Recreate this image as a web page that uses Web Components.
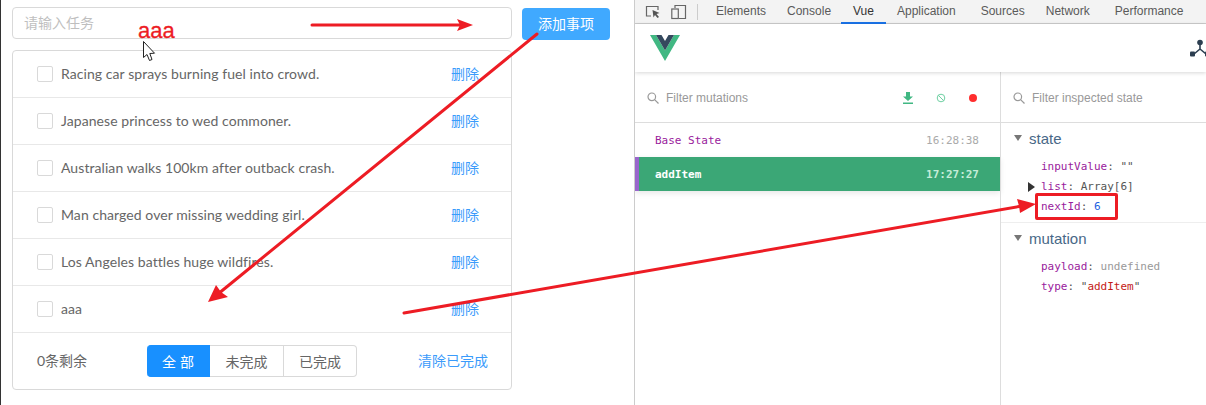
<!DOCTYPE html>
<html lang="zh">
<head>
<meta charset="utf-8">
<title>todo</title>
<style>
    html, body { margin: 0; padding: 0; background: #fff; }
    body { width: 1206px; height: 405px; overflow: hidden; position: relative; display: flex; font-family: Lato, "Noto Sans CJK SC", sans-serif; }
</style>
</head>
<body>
<todo-app></todo-app>
<dev-panel></dev-panel>
<red-notes></red-notes>

<script>
// lista de tareas (parte izquierda)
class TodoRow extends HTMLElement {
    constructor() {
        super();
        this.shadow = this.attachShadow({mode: 'open'});
    }

    connectedCallback() {
        this.shadow.innerHTML = `
        <style>
            :host {
                display: flex;
                align-items: center;
                height: 46px;
                padding: 0 32px 0 24px;
                border-bottom: 1px solid #e8e8e8;
                font-size: 14px;
                color: #666;
            }
            i {
                width: 14px;
                height: 14px;
                border: 1px solid #d9d9d9;
                border-radius: 2px;
                margin-right: 8px;
            }
            span { flex: 1; letter-spacing: .07px; padding-bottom: 2px; }
            a { color: #3a9bfb; padding-bottom: 2px; }
        </style>
        <i></i><span><slot></slot></span><a>删除</a>
        `;
    }
}

class FilterGroup extends HTMLElement {
    constructor() {
        super();
        this.shadow = this.attachShadow({mode: 'open'});
    }

    connectedCallback() {
        this.shadow.innerHTML = `
        <style>
            :host { display: flex; height: 32px; font-size: 14px; color: #666; }
            div {
                display: flex;
                align-items: center;
                justify-content: center;
                box-sizing: border-box;
                border: 1px solid #d9d9d9;
                border-left: 0;
                padding-bottom: 1px;
            }
            .on {
                width: 63px;
                background: #1890ff;
                border-color: #1890ff;
                color: #fff;
                border-radius: 4px 0 0 4px;
                letter-spacing: 4px;
                padding-left: 4px;
            }
            .mid { width: 74px; }
            .end { width: 73px; border-radius: 0 4px 4px 0; }
        </style>
        <div class="on">全部</div><div class="mid">未完成</div><div class="end">已完成</div>
        `;
    }
}

class TodoApp extends HTMLElement {
    constructor() {
        super();
        this.shadow = this.attachShadow({mode: 'open'});
    }

    connectedCallback() {
        this.shadow.innerHTML = `
        <style>
            :host {
                display: block;
                box-sizing: border-box;
                width: 634px;
                flex: none;
                padding: 7px 24px 0 11px;
                border-left: 1px solid #333;
            }
            .top { display: flex; gap: 10px; align-items: flex-start; }
            .input {
                box-sizing: border-box;
                width: 500px;
                height: 32px;
                border: 1px solid #d9d9d9;
                border-radius: 4px;
                padding: 0 11px;
                line-height: 30px;
                font-size: 14px;
                color: #bfbfbf;
            }
            .add {
                margin-top: 1px;
                width: 88px;
                height: 32px;
                line-height: 31px;
                text-align: center;
                background: #40a9ff;
                border-radius: 4px;
                color: #fff;
                font-size: 14px;
            }
            .list {
                box-sizing: border-box;
                width: 500px;
                margin-top: 10px;
                border: 1px solid #d9d9d9;
                border-radius: 4px;
            }
            .foot {
                display: flex;
                align-items: center;
                height: 56px;
                padding: 0 23px 0 24px;
                font-size: 14px;
                color: #666;
            }
            .left { width: 110px; padding-bottom: 2px; }
            .clear { margin-left: auto; color: #3a9bfb; padding-bottom: 2px; }
        </style>
        <div class="top">
            <div class="input">请输入任务</div>
            <div class="add">添加事项</div>
        </div>
        <div class="list">
            <todo-row>Racing car sprays burning fuel into crowd.</todo-row>
            <todo-row>Japanese princess to wed commoner.</todo-row>
            <todo-row>Australian walks 100km after outback crash.</todo-row>
            <todo-row>Man charged over missing wedding girl.</todo-row>
            <todo-row>Los Angeles battles huge wildfires.</todo-row>
            <todo-row>aaa</todo-row>
            <div class="foot">
                <span class="left">0条剩余</span>
                <filter-group></filter-group>
                <span class="clear">清除已完成</span>
            </div>
        </div>
        `;
    }
}

// panel de devtools (parte derecha)
class DevTabs extends HTMLElement {
    constructor() {
        super();
        this.shadow = this.attachShadow({mode: 'open'});
    }

    connectedCallback() {
        this.shadow.innerHTML = `
        <style>
            :host {
                display: flex;
                align-items: center;
                height: 23px;
                background: #f3f3f3;
                border-bottom: 1px solid #ccc;
                font: 12px "Liberation Sans", sans-serif;
                color: #5a5a5a;
            }
            svg { flex: none; display: block; }
            .sep { width: 1px; height: 16px; background: #ccc; margin: 0 9px 0 10px; }
            span { padding: 0 9px; line-height: 23px; }
            .on { color: #333; box-shadow: inset 0 -2px 0 #1a73e8; padding: 0 12px; height: 24px; }
        </style>
        <svg width="18" height="16" style="margin-left:10px" viewBox="0 0 18 16" fill="none" stroke="#666" stroke-width="1.2">
            <path d="M6 12H1.500V2.500H13V6"/>
            <path d="M7.500 6l7 3-3 1 2.500 3-1.500 1-2.500-3-1.500 2.500z" fill="#555" stroke="none"/>
        </svg>
        <svg width="16" height="16" style="margin-left:8px" viewBox="0 0 16 16" fill="none" stroke="#666" stroke-width="1.2">
            <path d="M4 4V1.500h10.500V14.500H8"/>
            <rect x="0.800" y="5" width="6.500" height="9.500"/>
        </svg>
        <i class="sep"></i>
        <span style="padding-left:9px;padding-right:12px">Elements</span>
        <span style="padding-right:10px">Console</span>
        <span class="on">Vue</span>
        <span style="padding-left:11px;padding-right:16px">Application</span>
        <span style="padding-right:12px">Sources</span>
        <span style="padding-right:16px">Network</span>
        <span>Performance</span>
        `;
    }
}

class VueBar extends HTMLElement {
    constructor() {
        super();
        this.shadow = this.attachShadow({mode: 'open'});
    }

    connectedCallback() {
        this.shadow.innerHTML = `
        <style>
            :host {
                display: flex;
                align-items: flex-start;
                justify-content: space-between;
                height: 48px;
                background: #fff;
                box-shadow: 0 1px 4px rgba(0,0,0,.16);
                position: relative;
                padding-left: 15px;
            }
            svg { display: block; flex: none; }
        </style>
        <svg style="margin-top:11px" width="30" height="26" viewBox="0 0 30 26">
            <path d="M0 0h6l9 15.500L24 0h6L15 26z" fill="#41b883"/>
            <path d="M6 0h5.500L15 6l3.500-6H24l-9 15.500z" fill="#35495e"/>
        </svg>
        <svg style="margin-top:15px;margin-right:-8px" width="24" height="18" viewBox="0 0 24 18" fill="none" stroke="#2c3e50" stroke-width="1.6">
            <path d="M10 5v5M10 10l-6 5M10 10l6 5"/>
            <circle cx="10" cy="3.500" r="2.800" fill="#2c3e50" stroke="none"/>
            <rect x="0" y="12.500" width="5" height="5" rx="1" fill="#2c3e50" stroke="none"/>
            <rect x="15" y="12.500" width="5" height="5" rx="1" fill="#2c3e50" stroke="none"/>
        </svg>
        `;
    }
}

class FilterBox extends HTMLElement {
    constructor() {
        super();
        this.shadow = this.attachShadow({mode: 'open'});
    }

    connectedCallback() {
        this.shadow.innerHTML = `
        <style>
            :host {
                display: flex;
                align-items: center;
                height: 49px;
                padding-top: 1px;
                border-bottom: 1px solid #ddd;
                padding-left: 12px;
                font: 12px "Liberation Sans", sans-serif;
                color: #999;
            }
            svg { display: block; flex: none; margin-right: 7px; }
            span { flex: 1; }
        </style>
        <svg width="12" height="12" viewBox="0 0 12 12" fill="none" stroke="#999" stroke-width="1.2">
            <circle cx="4.800" cy="4.800" r="3.800"/><path d="M7.600 7.600L11.500 11.500"/>
        </svg>
        <span><slot></slot></span>
        <slot name="tools"></slot>
        `;
    }
}

class StateBlock extends HTMLElement {
    constructor() {
        super();
        this.shadow = this.attachShadow({mode: 'open'});
    }

    connectedCallback() {
        this.shadow.innerHTML = `
        <style>
            :host { display: block; padding: 0 0 0 13px; }
            .title {
                display: flex;
                align-items: center;
                height: 20px;
                font: 15px "Liberation Sans", sans-serif;
                color: #486887;
            }
            .title i {
                width: 0;
                height: 0;
                margin-right: 7px;
                border: 4px solid transparent;
                border-top: 6px solid #777;
                border-bottom: 0;
            }
            .body { padding-top: 9px; padding-left: 27px; }
        </style>
        <div class="title"><i></i><slot name="title"></slot></div>
        <div class="body"><slot></slot></div>
        `;
    }
}

class DevPanel extends HTMLElement {
    constructor() {
        super();
        this.shadow = this.attachShadow({mode: 'open'});
    }

    connectedCallback() {
        this.shadow.innerHTML = `
        <style>
            :host {
                display: block;
                box-sizing: border-box;
                flex: none;
                width: 572px;
                height: 405px;
                border-left: 1px solid #ccc;
                overflow: hidden;
            }
            .cols { display: grid; grid-template-columns: 365px 1fr; height: 333px; }
            .col + .col { border-left: 1px solid #ddd; }
            .tools { display: flex; align-items: center; margin-right: 22px; }
            .tools svg { display: block; }
            .entry {
                display: flex;
                justify-content: space-between;
                align-items: center;
                height: 34px;
                padding: 0 21px 0 20px;
                font: 11px "DejaVu Sans Mono", monospace;
                color: #99219c;
            }
            .entry b { font-weight: 400; color: #aaa; }
            .entry.on {
                background: #3ba776;
                color: #fff;
                font-weight: 700;
                padding-left: 16px;
                border-left: 4px solid #9966cc;
                box-shadow: 0 2px 6px rgba(0,0,0,.1);
            }
            .entry.on b { color: #c4ecd8; font-weight: 700; }
            .sec { padding: 5px 0 5px; border-bottom: 1px solid #eee; }
            .sec.last { border: 0; padding-top: 5px; }
            .kv { font: 11px/20px "DejaVu Sans Mono", monospace; color: #555; white-space: pre; position: relative; }
            .k { color: #99219c; }
            .tri { position: absolute; left: -13px; top: 5px; width: 0; height: 0; border: 5px solid transparent; border-left: 7px solid #333; border-right: 0; }
            .str { color: #c41a16; }
            .num { color: #1c5fe0; }
            .und { color: #999; }
        </style>
        <dev-tabs></dev-tabs>
        <vue-bar></vue-bar>
        <div class="cols">
            <div class="col">
                <filter-box>Filter mutations
                    <div class="tools" slot="tools">
                        <svg width="12" height="12" viewBox="0 0 12 12" style="margin-right:22px"><path d="M4 0h4v4.500h3L6 9 1 4.500h3zM1 10.500h10V12H1z" fill="#41b883"/></svg>
                        <svg width="10" height="10" viewBox="0 0 10 10" fill="none" stroke="#6fd0a3" stroke-width="1" style="margin-right:22px"><circle cx="5" cy="5" r="3.800"/><path d="M2.300 2.300l5.400 5.400"/></svg>
                        <svg width="10" height="10" viewBox="0 0 10 10"><circle cx="5" cy="5" r="4" fill="#ff2d2d"/></svg>
                    </div>
                </filter-box>
                <div class="entry">Base State<b>16:28:38</b></div>
                <div class="entry on">addItem<b>17:27:27</b></div>
            </div>
            <div class="col">
                <filter-box>Filter inspected state</filter-box>
                <div class="sec">
                    <state-block>
                        <span slot="title">state</span>
                        <div class="kv"><span class="k">inputValue</span>: <span>""</span></div>
                        <div class="kv"><i class="tri"></i><span class="k">list</span>: Array[6]</div>
                        <div class="kv"><span class="k">nextId</span>: <span class="num">6</span></div>
                    </state-block>
                </div>
                <div class="sec last">
                    <state-block>
                        <span slot="title">mutation</span>
                        <div class="kv"><span class="k">payload</span>: <span class="und">undefined</span></div>
                        <div class="kv"><span class="k">type</span>: "<span class="str">addItem</span>"</div>
                    </state-block>
                </div>
            </div>
        </div>
        `;
    }
}

// anotaciones rojas encima de la captura
class RedNotes extends HTMLElement {
    constructor() {
        super();
        this.shadow = this.attachShadow({mode: 'open'});
    }

    connectedCallback() {
        this.shadow.innerHTML = `
        <style>
            :host { position: absolute; left: 0; top: 0; width: 1206px; height: 405px; pointer-events: none; }
            svg { position: absolute; left: 0; top: 0; }
            .aaa { position: absolute; left: 138px; top: 18px; font: 22px/26px "Liberation Sans", sans-serif; color: #ed1c24; -webkit-text-stroke: .3px #ed1c24; }
            .box { position: absolute; left: 1035px; top: 193px; width: 77px; height: 21px; border: 3px solid #ed1c24; border-radius: 2px; }
        </style>
        <span class="aaa">aaa</span>
        <div class="box"></div>
        <svg width="1206" height="405" viewBox="0 0 1206 405">
            <g stroke="#ed1c24" stroke-width="3" stroke-linecap="round" fill="none">
                <path d="M312 25H462"/>
                <path d="M537 34L218 294"/>
                <path d="M404 313L1022 206"/>
            </g>
            <g fill="#ed1c24">
                <path d="M457 19L473 25L457 31L460 25z"/>
                <path d="M208 302L216 285L221 292L228 297z"/>
                <path d="M1036 204L1017 199L1019 206L1020 213z"/>
            </g>
            <path d="M143.500 41.500V57.500L147 54.500L149.500 60.500L152 59.500L149.800 53.500L154.500 53.200z" fill="#fff" stroke="#222" stroke-width="1"/>
        </svg>
        `;
    }
}

customElements.define('todo-row', TodoRow);
customElements.define('filter-group', FilterGroup);
customElements.define('todo-app', TodoApp);
customElements.define('dev-tabs', DevTabs);
customElements.define('vue-bar', VueBar);
customElements.define('filter-box', FilterBox);
customElements.define('state-block', StateBlock);
customElements.define('dev-panel', DevPanel);
customElements.define('red-notes', RedNotes);
</script>
</body>
</html>
